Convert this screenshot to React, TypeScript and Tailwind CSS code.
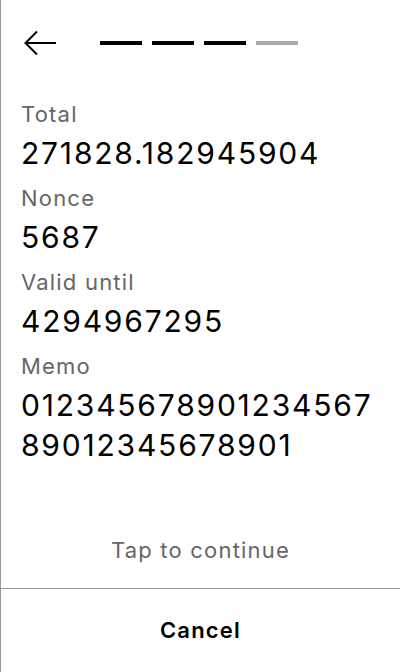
const fields = [
  { label: "Total", value: "271828.182945904" },
  { label: "Nonce", value: "5687" },
  { label: "Valid until", value: "4294967295" },
  { label: "Memo", value: "01234567890123456789012345678901" },
];

const steps = [true, true, true, false];

function BackArrow() {
  return (
    <svg width="32" height="26" viewBox="0 0 32 26" fill="none" stroke="#000" strokeWidth="2">
      <path d="M32 13H2" />
      <path d="M13 1.5L1.5 13L13 24.5" />
    </svg>
  );
}

export default function App() {
  return (
    <div
      className="w-[400px] h-[672px] bg-white border-l border-[#9a9a9a] flex flex-col text-black"
      style={{ fontFamily: "Inter, 'Noto Sans', sans-serif" }}
    >
      <div className="h-[86px] flex items-center pl-[23px]">
        <BackArrow />
        <div className="flex gap-[10px] ml-[44px] -mt-[1px]">
          {steps.map((done, i) => (
            <div key={i} className={`w-[42px] h-[4px] ${done ? "bg-black" : "bg-[#aaaaaa]"}`} />
          ))}
        </div>
      </div>

      <div className="flex-1 pt-[14px] pl-[20px] pr-[20px]">
        {fields.map((f) => (
          <div key={f.label} className="mb-[11px]">
            <div className="text-[22px] leading-[28px] tracking-[1.2px] text-[#666666] mb-[5px]">{f.label}</div>
            <div className="text-[30px] leading-[40px] tracking-[1.8px] break-all">{f.value}</div>
          </div>
        ))}
      </div>

      <div className="text-center text-[22px] leading-[28px] tracking-[1.2px] text-[#666666] pb-6">
        Tap to continue
      </div>

      <div className="border-t border-[#9a9a9a] h-[84px] flex items-center justify-center">
        <span className="text-[22px] font-semibold tracking-[1.2px]">Cancel</span>
      </div>
    </div>
  );
}
